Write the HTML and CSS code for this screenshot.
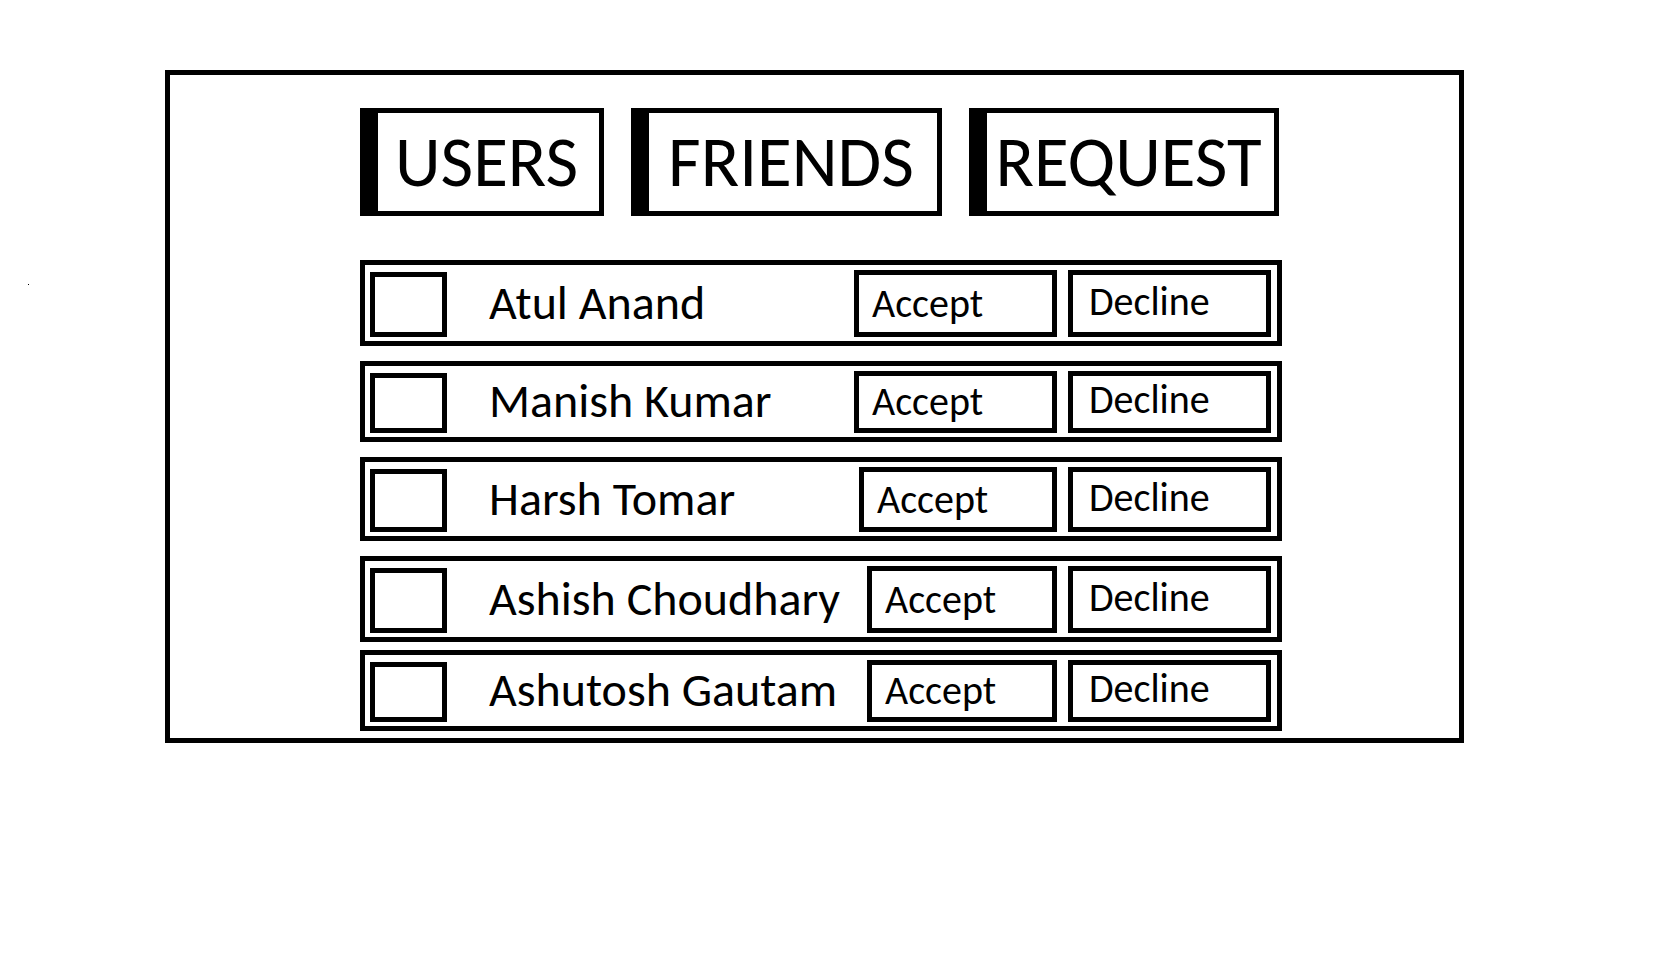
FILE: index.html
```html
<!DOCTYPE html>
<html lang="en">
<head>
<meta charset="utf-8">
<meta name="viewport" content="width=device-width, initial-scale=1">
<title>Friend requests</title>
<link rel="stylesheet" href="styles.css">
</head>
<body>
<span class="speck" aria-hidden="true"></span>
<main class="panel">
  <div class="content">
    <nav class="tabs">
      <button class="tab" type="button">USERS</button>
      <button class="tab" type="button">FRIENDS</button>
      <button class="tab" type="button">REQUEST</button>
    </nav>
    <ul class="requests">
      <li class="request">
        <input class="check" type="checkbox" id="u1">
        <label class="name" for="u1">Atul Anand</label>
        <button class="action accept" type="button">Accept</button>
        <button class="action decline" type="button">Decline</button>
      </li>
      <li class="request">
        <input class="check" type="checkbox" id="u2">
        <label class="name" for="u2">Manish Kumar</label>
        <button class="action accept" type="button">Accept</button>
        <button class="action decline" type="button">Decline</button>
      </li>
      <li class="request">
        <input class="check" type="checkbox" id="u3">
        <label class="name" for="u3">Harsh Tomar</label>
        <button class="action accept" type="button">Accept</button>
        <button class="action decline" type="button">Decline</button>
      </li>
      <li class="request">
        <input class="check" type="checkbox" id="u4">
        <label class="name" for="u4">Ashish Choudhary</label>
        <button class="action accept" type="button">Accept</button>
        <button class="action decline" type="button">Decline</button>
      </li>
      <li class="request">
        <input class="check" type="checkbox" id="u5">
        <label class="name" for="u5">Ashutosh Gautam</label>
        <button class="action accept" type="button">Accept</button>
        <button class="action decline" type="button">Decline</button>
      </li>
    </ul>
  </div>
</main>
</body>
</html>
```
FILE: styles.css
```css
* { box-sizing: border-box; }

body {
  margin: 0;
  background: #fff;
  color: #000;
  font-family: Carlito, Calibri, Lato, sans-serif;
}

button {
  margin: 0;
  border-radius: 0;
  background: #fff;
  color: inherit;
  font-family: inherit;
  cursor: pointer;
}

.speck {
  position: absolute;
  left: 28px;
  top: 284px;
  width: 1px;
  height: 1px;
  background: #000;
}

.panel {
  margin: 70px 216px 0 165px;
  padding: 33px 20px 7px 190px;
  border: 5px solid #000;
}

.content { max-width: 922px; }

.tabs {
  display: grid;
  grid-template-columns: 244fr 311fr 310fr;
  gap: 27px;
  padding-right: 3px;
}

.tab {
  height: 108px;
  padding: 0 4px 0 0;
  border: 5px solid #000;
  border-left-width: 18px;
  font-size: 71px;
  line-height: 88px;
  text-align: center;
}

.requests {
  display: flex;
  flex-direction: column;
  gap: 15px;
  margin: 44px 0 0;
  padding: 0;
  list-style: none;
}

.request {
  --accept: 203px;
  display: flex;
  height: 86px;
  padding: 5px 6px 4px 5px;
  border: 5px solid #000;
}

.request:nth-child(2) { height: 81px; }
.request:nth-child(3) { height: 84px; --accept: 198px; }
.request:nth-child(4) { --accept: 190px; }
.request:nth-child(5) { height: 81px; --accept: 190px; margin-top: -7px; }

.check {
  appearance: none;
  flex: none;
  width: 77px;
  margin: 2px 0 0;
  border: 5px solid #000;
}

.check:checked { background: #000; box-shadow: inset 0 0 0 6px #fff; }

.name {
  flex: 1;
  align-self: center;
  padding: 0 0 2px 42px;
  font-size: 48px;
  line-height: 56px;
  white-space: nowrap;
}

.action {
  flex: none;
  border: 5px solid #000;
  font-size: 40px;
  line-height: 48px;
  text-align: left;
}

.accept { width: var(--accept); padding: 0 13px; }
.decline { width: 203px; margin-left: 11px; padding: 0 16px 4px; }
```
